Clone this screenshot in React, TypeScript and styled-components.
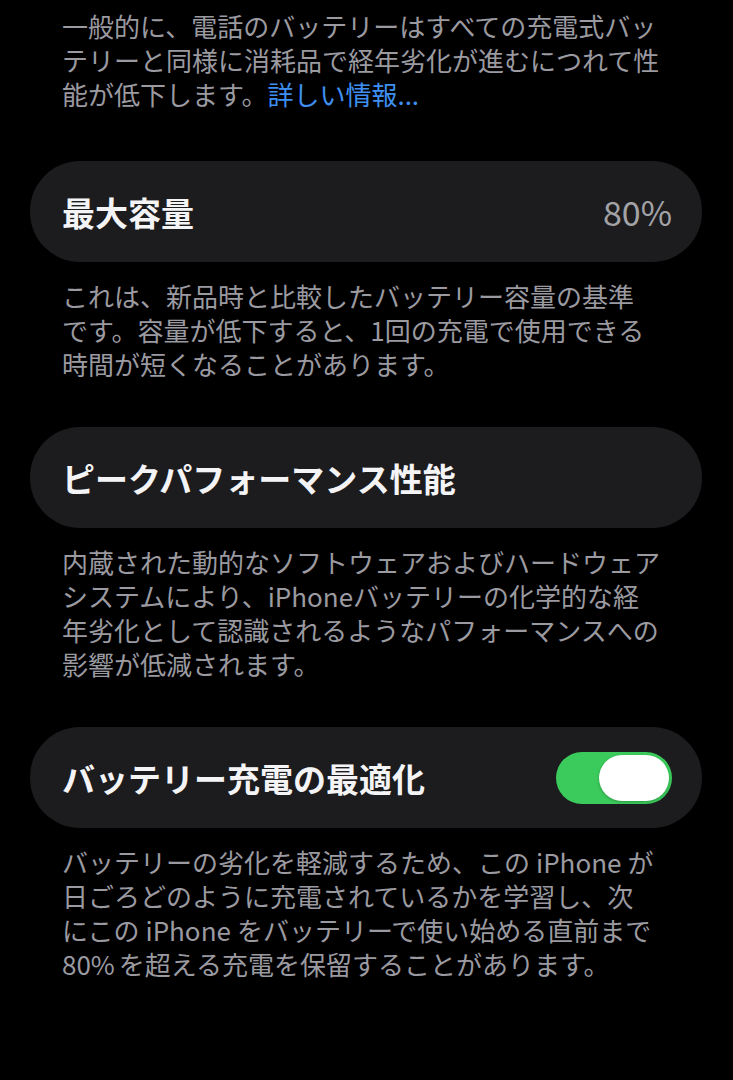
import styled, { createGlobalStyle } from 'styled-components'

const GlobalStyle = createGlobalStyle`
  html, body {
    margin: 0;
    padding: 0;
    background: #000;
  }
  body {
    font-family: "Noto Sans CJK JP", "Noto Sans", sans-serif;
    -webkit-font-smoothing: antialiased;
  }
`

const Page = styled.div`
  width: 733px;
  min-height: 1080px;
  box-sizing: border-box;
  padding: 9px 31px 0 30px;
  display: flex;
  flex-direction: column;
  background: #000;
`

const Footnote = styled.p<{ $after?: number }>`
  margin: 0 0 ${(p) => p.$after ?? 46}px;
  padding: 0 30px 0 32px;
  font-size: 26px;
  line-height: 34px;
  color: #9a9aa0;
  letter-spacing: 0;
`

const Link = styled.a`
  color: #3f8ff2;
  text-decoration: none;
`

// latin words set inside japanese text get a little air around them
const Latin = styled.span<{ $left?: number; $right?: number }>`
  margin-left: ${(p) => p.$left ?? 0}px;
  margin-right: ${(p) => p.$right ?? 0}px;
`

const Card = styled.div`
  height: 101px;
  box-sizing: border-box;
  padding: 0 30px 0 32px;
  margin-bottom: 17px;
  display: flex;
  align-items: center;
  justify-content: space-between;
  background: #1c1c1e;
  border-radius: 50px;
`

const Title = styled.span`
  font-size: 33px;
  font-weight: 600;
  color: #f4f4f6;
`

const Value = styled.span`
  font-size: 34px;
  font-weight: 400;
  color: #a2a2a7;
`

const Switch = styled.div<{ $on: boolean }>`
  width: 116px;
  height: 52px;
  box-sizing: border-box;
  padding: 3px;
  border-radius: 26px;
  background: ${(p) => (p.$on ? '#3bcb5c' : '#39393d')};
  display: flex;
  justify-content: ${(p) => (p.$on ? 'flex-end' : 'flex-start')};
`

const Knob = styled.div`
  width: 70px;
  height: 46px;
  border-radius: 23px;
  background: #fff;
  box-shadow: 0 1px 3px rgba(0, 0, 0, 0.25);
`

export default function App() {
  return (
    <Page>
      <GlobalStyle />
      <Footnote $after={50}>
        一般的に、電話のバッテリーはすべての充電式バッ
        <br />
        テリーと同様に消耗品で経年劣化が進むにつれて性
        <br />
        能が低下します。<Link href="#">詳しい情報...</Link>
      </Footnote>

      <Card>
        <Title>最大容量</Title>
        <Value>80%</Value>
      </Card>
      <Footnote>
        これは、新品時と比較したバッテリー容量の基準
        <br />
        です。容量が低下すると、1回の充電で使用できる
        <br />
        時間が短くなることがあります。
      </Footnote>

      <Card>
        <Title>ピークパフォーマンス性能</Title>
      </Card>
      <Footnote>
        内蔵された動的なソフトウェアおよびハードウェア
        <br />
        システムにより、iPhoneバッテリーの化学的な経
        <br />
        年劣化として認識されるようなパフォーマンスへの
        <br />
        影響が低減されます。
      </Footnote>

      <Card>
        <Title>バッテリー充電の最適化</Title>
        <Switch $on>
          <Knob />
        </Switch>
      </Card>
      <Footnote>
        バッテリーの劣化を軽減するため、この<Latin $left={6} $right={6}>iPhone</Latin>が
        <br />
        日ごろどのように充電されているかを学習し、次
        <br />
        にこの<Latin $left={6} $right={6}>iPhone</Latin>をバッテリーで使い始める直前まで
        <br />
        <Latin $right={4}>80%</Latin>を超える充電を保留することがあります。
      </Footnote>
    </Page>
  )
}
